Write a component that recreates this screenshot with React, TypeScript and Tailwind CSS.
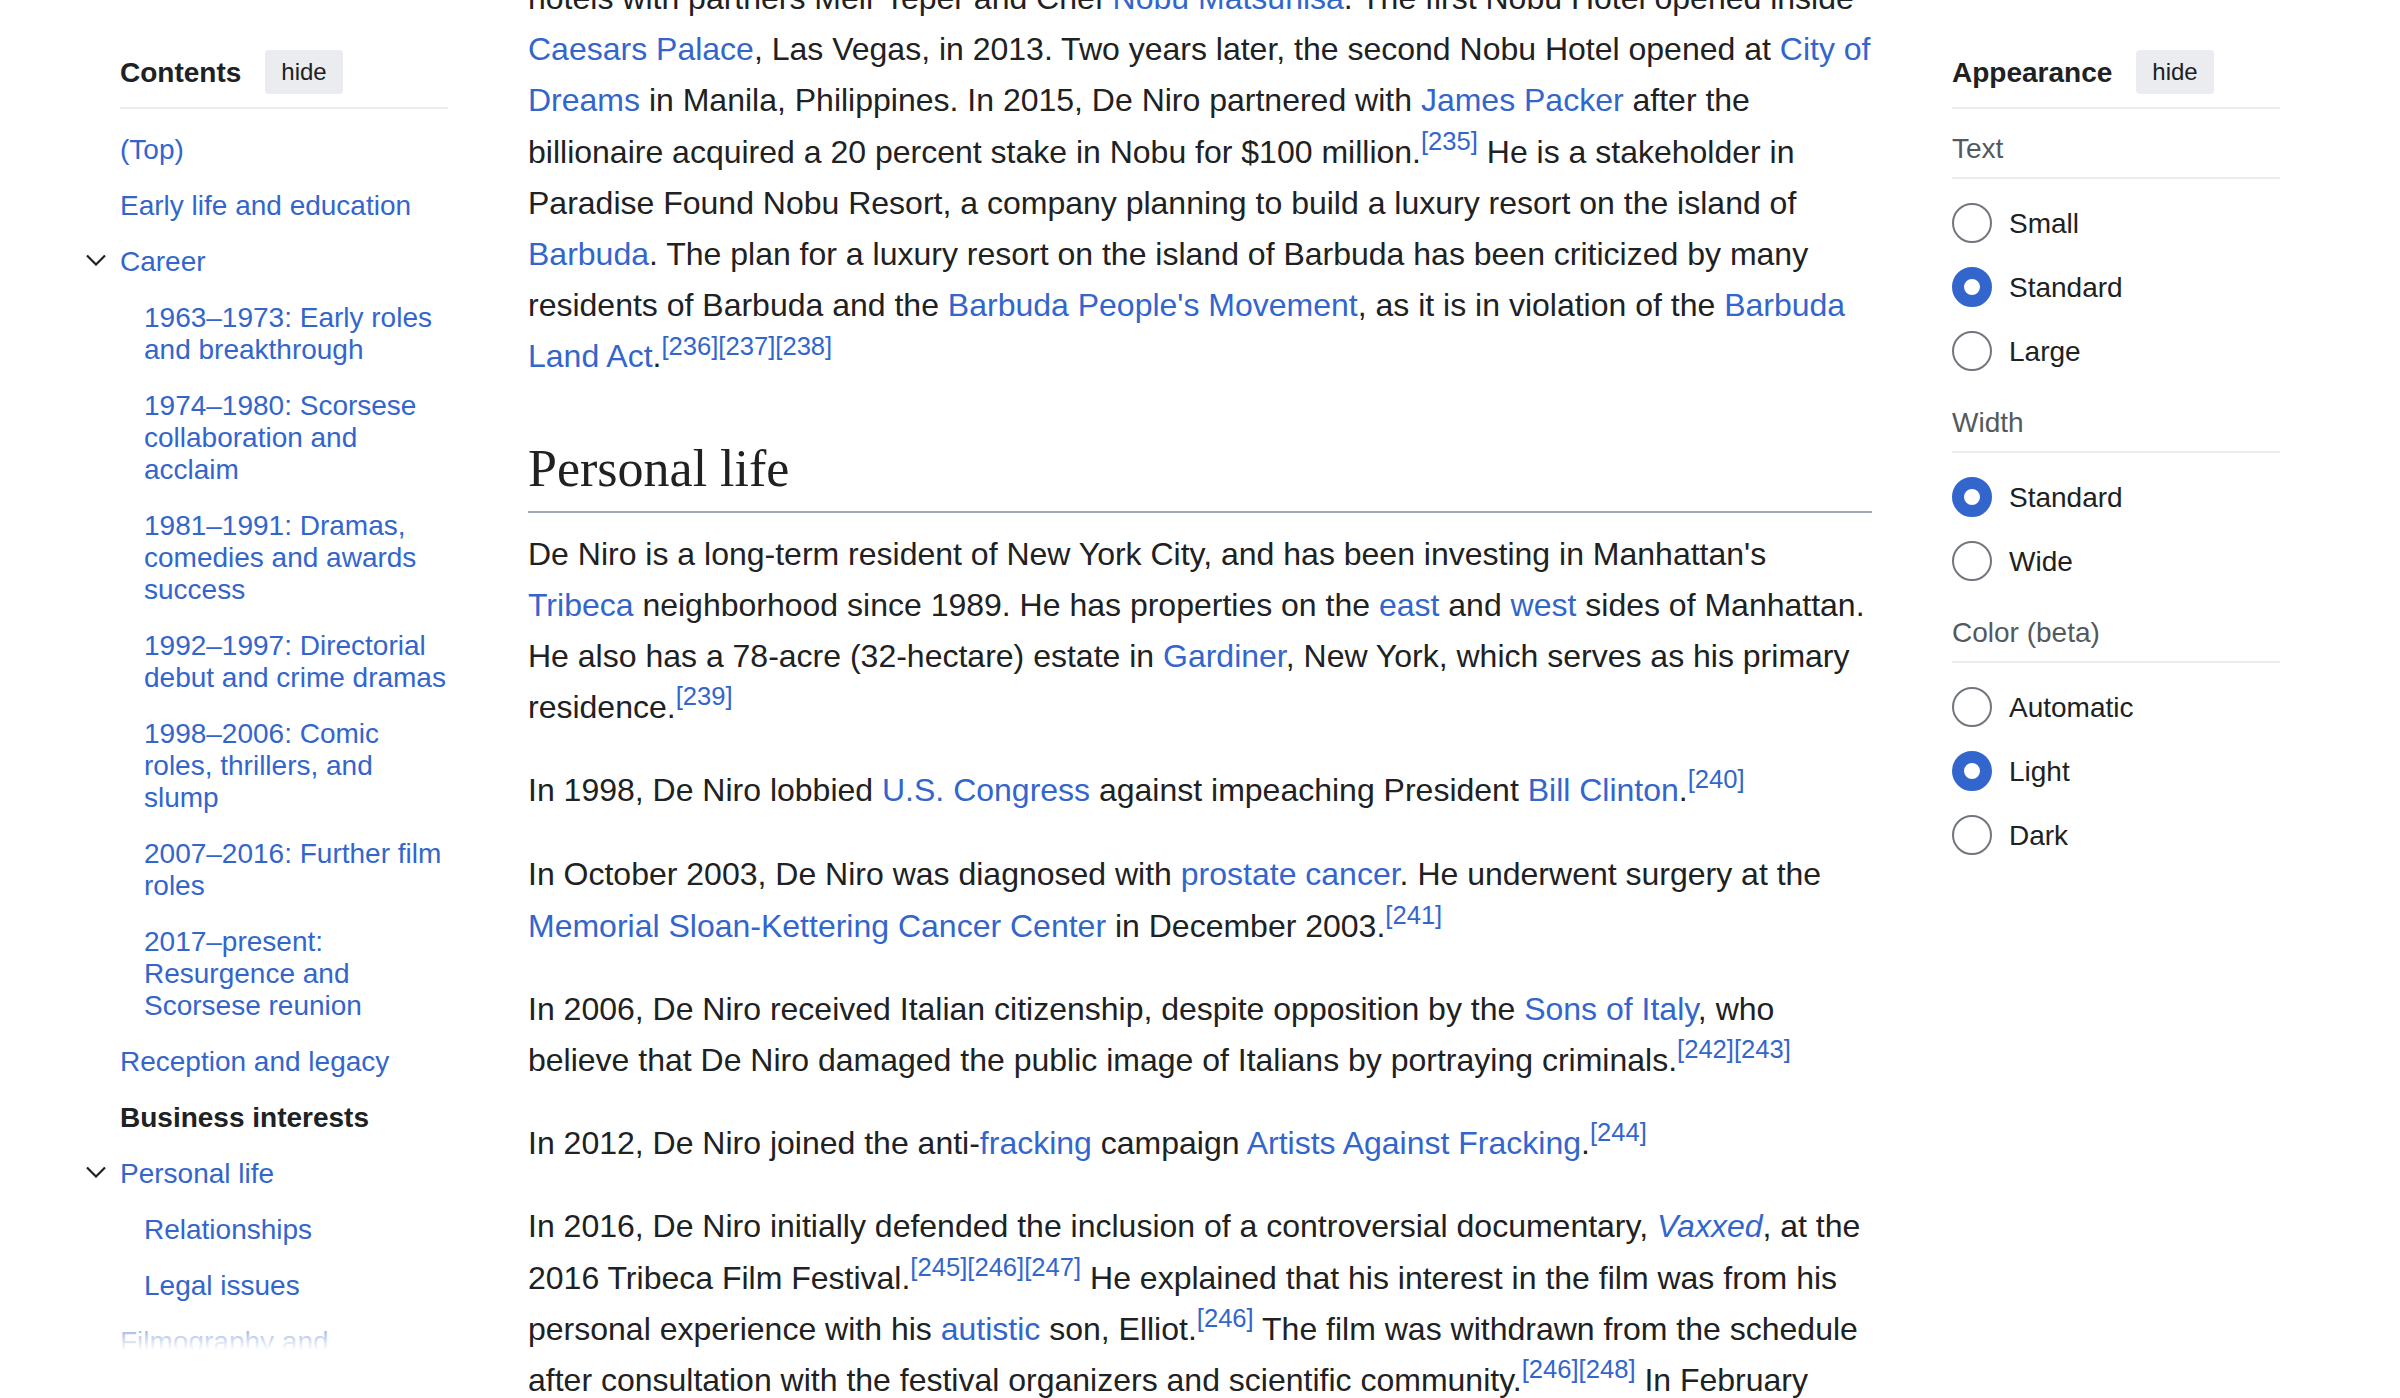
import { ReactNode } from "react";

const sans = { fontFamily: '"Liberation Sans", Arial, Helvetica, sans-serif' };

interface TocItem {
  label: string;
  sub?: boolean;
  toggle?: boolean;
  active?: boolean;
}

const TOC: TocItem[] = [
  { label: "(Top)" },
  { label: "Early life and education" },
  { label: "Career", toggle: true },
  { label: "1963–1973: Early roles and breakthrough", sub: true },
  { label: "1974–1980: Scorsese collaboration and acclaim", sub: true },
  { label: "1981–1991: Dramas, comedies and awards success", sub: true },
  { label: "1992–1997: Directorial debut and crime dramas", sub: true },
  { label: "1998–2006: Comic roles, thrillers, and slump", sub: true },
  { label: "2007–2016: Further film roles", sub: true },
  { label: "2017–present: Resurgence and Scorsese reunion", sub: true },
  { label: "Reception and legacy" },
  { label: "Business interests", active: true },
  { label: "Personal life", toggle: true },
  { label: "Relationships", sub: true },
  { label: "Legal issues", sub: true },
  { label: "Filmography and discography" },
];

const APPEARANCE = [
  { title: "Text", options: ["Small", "Standard", "Large"], checked: "Standard" },
  { title: "Width", options: ["Standard", "Wide"], checked: "Standard" },
  { title: "Color (beta)", options: ["Automatic", "Light", "Dark"], checked: "Light" },
];

const L = ({ children }: { children: ReactNode }) => (
  <a className="text-[#3366cc]">{children}</a>
);

const Ref = ({ children }: { children: ReactNode }) => (
  <sup className="text-[0.8em] text-[#3366cc]">{children}</sup>
);

const PanelHeader = ({ title }: { title: string }) => (
  <div className="flex items-center gap-[24px] border-b-2 border-[#eaecf0] pb-[13px] pt-[50px]">
    <h2 className="pt-[2px] text-[28px] font-bold text-[#202122]">{title}</h2>
    <button className="h-[44px] rounded-[4px] bg-[#eaecf0] px-[16px] text-[24px] text-[#202122]">
      hide
    </button>
  </div>
);

const Chevron = () => (
  <svg width="20" height="12" viewBox="0 0 20 12" fill="none">
    <path d="M1 1.5 L10 10.5 L19 1.5" stroke="#202122" strokeWidth="2.2" />
  </svg>
);

const Contents = () => {
  return (
    <aside className="relative h-[1350px] w-[368px] shrink-0 overflow-hidden pl-[40px]">
      <PanelHeader title="Contents" />
      <ul className="pt-[13px] text-[28px] leading-[32px]">
        {TOC.map((item) => (
          <li
            key={item.label}
            className={`flex py-[12px] ${item.sub ? "pl-[24px]" : ""}`}
          >
            {item.toggle && (
              <span className="-ml-[34px] mr-[14px] flex h-[28px] w-[20px] items-center">
                <Chevron />
              </span>
            )}
            <span
              className={
                item.active ? "font-bold text-[#202122]" : "text-[#3366cc]"
              }
            >
              {item.label}
            </span>
          </li>
        ))}
      </ul>
      {/* fade out the overflowing list */}
      <div className="pointer-events-none absolute bottom-0 left-0 h-[44px] w-full bg-linear-to-b from-white/0 to-white" />
    </aside>
  );
};

const Radio = ({ label, checked }: { label: string; checked: boolean }) => (
  <label className="flex h-[64px] items-center gap-[17px]">
    <span
      className={`h-[40px] w-[40px] shrink-0 rounded-full bg-white ${
        checked ? "border-[12px] border-[#3366cc]" : "border-2 border-[#72777d]"
      }`}
    />
    <span className="pt-[1px] text-[28px] text-[#202122]">{label}</span>
  </label>
);

const Appearance = () => (
  <aside className="ml-[80px] w-[328px] shrink-0">
    <PanelHeader title="Appearance" />
    {APPEARANCE.map((group) => (
      <section key={group.title}>
        <div className="border-b-2 border-[#eaecf0] pb-[12px] pt-[24px] text-[28px] leading-[32px] text-[#54595d]">
          {group.title}
        </div>
        <div className="pt-[12px]">
          {group.options.map((o) => (
            <Radio key={o} label={o} checked={o === group.checked} />
          ))}
        </div>
      </section>
    ))}
  </aside>
);

const Article = () => (
  <main className="ml-[80px] w-[1344px] shrink-0 text-[32px] leading-[1.6] text-[#202122]">
    <p className="-mt-[27px] mb-[32px]">
      hotels with partners Meir Teper and Chef <L>Nobu Matsuhisa</L>. The first
      Nobu Hotel opened inside <L>Caesars Palace</L>, Las Vegas, in 2013. Two
      years later, the second Nobu Hotel opened at <L>City of Dreams</L> in
      Manila, Philippines. In 2015, De Niro partnered with <L>James Packer</L>{" "}
      after the billionaire acquired a 20 percent stake in Nobu for $100
      million.<Ref>[235]</Ref> He is a stakeholder in Paradise Found Nobu
      Resort, a company planning to build a luxury resort on the island of{" "}
      <L>Barbuda</L>. The plan for a luxury resort on the island of Barbuda has
      been criticized by many residents of Barbuda and the{" "}
      <L>Barbuda People's Movement</L>, as it is in violation of the{" "}
      <L>Barbuda Land Act</L>.<Ref>[236][237][238]</Ref>
    </p>
    <h2
      className="mb-[16px] mt-[54px] border-b-2 border-[#a2a9b1] pb-[10px] text-[52px] leading-[64px] text-[#202122]"
      style={{ fontFamily: '"Liberation Serif", "Times New Roman", serif' }}
    >
      Personal life
    </h2>
    <p className="mb-[32px]">
      De Niro is a long-term resident of New York City, and has been investing
      in Manhattan's <L>Tribeca</L> neighborhood since 1989. He has properties
      on the <L>east</L> and <L>west</L> sides of Manhattan. He also has a
      78-acre (32-hectare) estate in <L>Gardiner</L>, New York, which serves as
      his primary residence.<Ref>[239]</Ref>
    </p>
    <p className="mb-[33px]">
      In 1998, De Niro lobbied <L>U.S. Congress</L> against impeaching President{" "}
      <L>Bill Clinton</L>.<Ref>[240]</Ref>
    </p>
    <p className="mb-[32px]">
      In October 2003, De Niro was diagnosed with <L>prostate cancer</L>. He
      underwent surgery at the <L>Memorial Sloan-Kettering Cancer Center</L> in
      December 2003.<Ref>[241]</Ref>
    </p>
    <p className="mb-[32px]">
      In 2006, De Niro received Italian citizenship, despite opposition by the{" "}
      <L>Sons of Italy</L>, who believe that De Niro damaged the public image of
      Italians by portraying criminals.<Ref>[242][243]</Ref>
    </p>
    <p className="mb-[32px]">
      In 2012, De Niro joined the anti-<L>fracking</L> campaign{" "}
      <L>Artists Against Fracking</L>.<Ref>[244]</Ref>
    </p>
    <p className="mb-[32px]">
      In 2016, De Niro initially defended the inclusion of a controversial
      documentary,{" "}
      <L>
        <i>Vaxxed</i>
      </L>
      , at the 2016 Tribeca Film Festival.<Ref>[245][246][247]</Ref> He
      explained that his interest in the film was from his personal experience
      with his <L>autistic</L> son, Elliot.<Ref>[246]</Ref> The film was
      withdrawn from the schedule after consultation with the festival
      organizers and scientific community.<Ref>[246][248]</Ref> In February
      2017, De Niro and Robert F. Kennedy Jr. held a press conference at the
      National Press Club in Washington, D.C.
    </p>
  </main>
);

export default function App() {
  return (
    <div
      className="flex h-[1398px] w-[2400px] overflow-hidden bg-white pl-[80px]"
      style={sans}
    >
      <Contents />
      <Article />
      <Appearance />
    </div>
  );
}
